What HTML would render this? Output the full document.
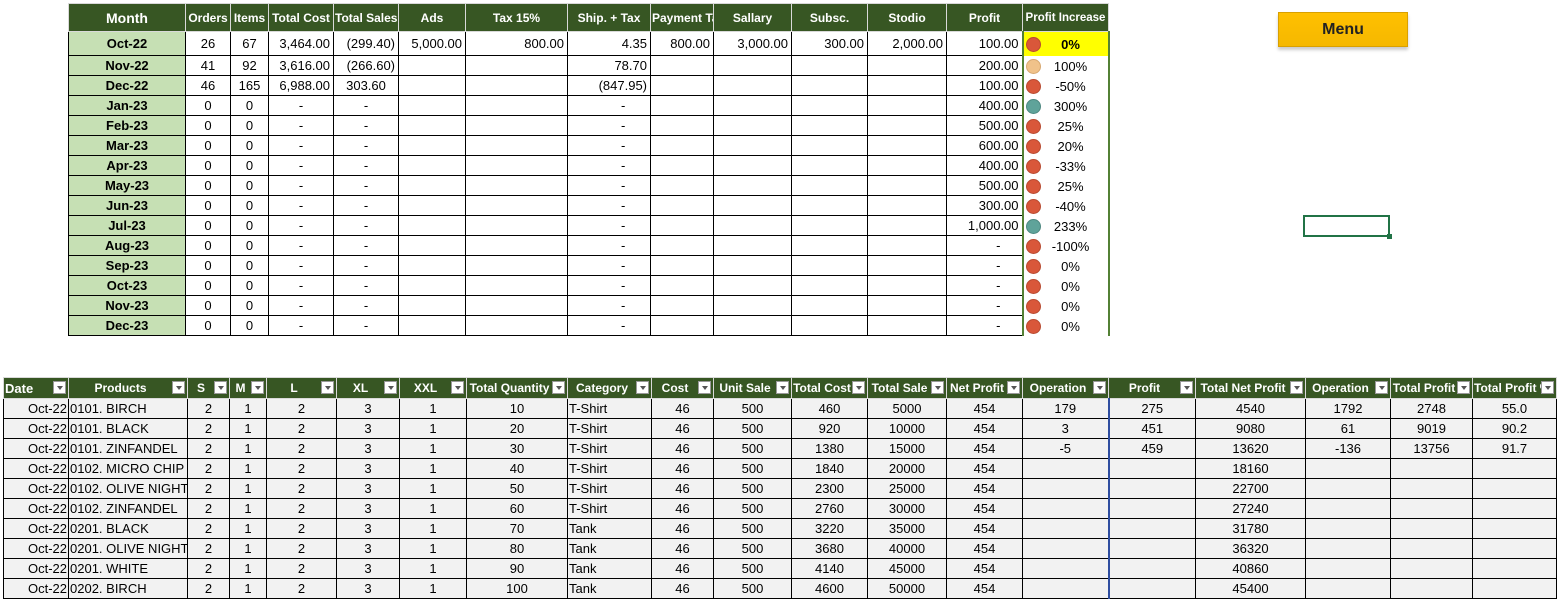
<!DOCTYPE html>
<html><head><meta charset="utf-8"><style>
body{margin:0;width:1559px;height:588px;background:#fff;overflow:hidden;position:relative;font-family:"Liberation Sans Narrow","Liberation Sans",sans-serif;font-size:13px;color:#000}
table{border-collapse:collapse;table-layout:fixed;position:absolute}
td,th{padding:0 3px;white-space:nowrap;overflow:hidden;box-sizing:border-box}
#t1{left:68px;top:3px;width:1040px}
#t1 th{background:#375623;color:#fff;height:28px;border:1px solid #d9d9d9;font-weight:bold;font-size:12px;padding:0 1px}
#t1 td{height:20px;border:1px solid #000;text-align:right}
#t1 td.m{background:#c6e0b4;font-weight:bold;text-align:center}
#t1 td.c{text-align:center}
#t1 tr.r1 td{height:24px}
#t1 td.pi{border:none;border-left:2px solid #538135;border-right:2px solid #538135;text-align:left;padding-left:2px}
.d{display:inline-block;width:15px;height:15px;border-radius:50%;background:#d9573a;vertical-align:middle;margin-right:10px;border:1px solid #b84a30;box-sizing:border-box}
.d.t{background:#f0c28a;border-color:#d7a870}.d.g{background:#5fa39a;border-color:#4d8880}
.pv{display:inline-block;width:40px;text-align:center;vertical-align:middle}
#t2{left:3px;top:377px;width:1553px}
#t2 th{background:#375623;color:#fff;height:21px;border:1px solid #d9d9d9;font-weight:bold;font-size:12px;position:relative;text-align:center;padding:0 16px 0 1px}
#t2 th i{position:absolute;right:2px;top:3px;width:13px;height:13px;background:#fff;border:1px solid #999;box-sizing:border-box}
#t2 th i:after{content:"";position:absolute;left:3px;top:4px;border:3px solid transparent;border-top:4px solid #555}
#t2 td{height:20px;border:1px solid #000;background:#f2f2f2;text-align:center;font-size:13px}
#t2 td:nth-child(1){text-align:right;padding-right:1px}
#t2 td:nth-child(2),#t2 td:nth-child(9){text-align:left;padding-left:1px}
#t2 td:nth-child(15){border-right:2px solid #2f4ea0}
.menu{position:absolute;left:1278px;top:12px;width:130px;height:35px;background:linear-gradient(#ffc000,#f5b800);box-sizing:border-box;border:1px solid #d9a000;box-shadow:0 3px 3px #ccc;font-family:"Liberation Sans",sans-serif;font-weight:bold;font-size:16px;text-align:center;line-height:34px;color:#222}
.sel{position:absolute;left:1303px;top:215px;width:87px;height:22px;border:2px solid #217346;box-sizing:border-box}
.sel:after{content:"";position:absolute;right:-4px;bottom:-4px;width:5px;height:5px;background:#217346}
</style></head><body>
<table id="t1">
<colgroup><col style="width:117px"><col style="width:45px"><col style="width:38px"><col style="width:65px"><col style="width:65px"><col style="width:67px"><col style="width:102px"><col style="width:83px"><col style="width:63px"><col style="width:78px"><col style="width:76px"><col style="width:79px"><col style="width:76px"><col style="width:86px"></colgroup>
<tr><th style="font-size:14px">Month</th><th>Orders</th><th>Items</th><th>Total Cost</th><th>Total Sales</th><th>Ads</th><th>Tax 15%</th><th>Ship. + Tax</th><th style="text-align:left">Payment Tax</th><th>Sallary</th><th>Subsc.</th><th>Stodio</th><th>Profit</th><th style="font-size:11.5px">Profit Increase</th></tr>
<tr class="r1"><td class="m">Oct-22</td><td class="c">26</td><td class="c">67</td><td>3,464.00</td><td>(299.40)</td><td>5,000.00</td><td>800.00</td><td>4.35</td><td>800.00</td><td>3,000.00</td><td>300.00</td><td>2,000.00</td><td>100.00</td><td class="pi" style="background:#ff0"><span class="d"></span><b class="pv">0%</b></td></tr>
<tr><td class="m">Nov-22</td><td class="c">41</td><td class="c">92</td><td>3,616.00</td><td>(266.60)</td><td></td><td></td><td>78.70</td><td></td><td></td><td></td><td></td><td>200.00</td><td class="pi"><span class="d t"></span><span class="pv">100%</span></td></tr>
<tr><td class="m">Dec-22</td><td class="c">46</td><td class="c">165</td><td>6,988.00</td><td class="c">303.60</td><td></td><td></td><td>(847.95)</td><td></td><td></td><td></td><td></td><td>100.00</td><td class="pi"><span class="d"></span><span class="pv">-50%</span></td></tr>
<tr><td class="m">Jan-23</td><td class="c">0</td><td class="c">0</td><td class="c">-</td><td class="c">-</td><td></td><td></td><td>- &nbsp;&nbsp;&nbsp;&nbsp;&nbsp;</td><td></td><td></td><td></td><td></td><td>400.00</td><td class="pi"><span class="d g"></span><span class="pv">300%</span></td></tr>
<tr><td class="m">Feb-23</td><td class="c">0</td><td class="c">0</td><td class="c">-</td><td class="c">-</td><td></td><td></td><td>- &nbsp;&nbsp;&nbsp;&nbsp;&nbsp;</td><td></td><td></td><td></td><td></td><td>500.00</td><td class="pi"><span class="d"></span><span class="pv">25%</span></td></tr>
<tr><td class="m">Mar-23</td><td class="c">0</td><td class="c">0</td><td class="c">-</td><td class="c">-</td><td></td><td></td><td>- &nbsp;&nbsp;&nbsp;&nbsp;&nbsp;</td><td></td><td></td><td></td><td></td><td>600.00</td><td class="pi"><span class="d"></span><span class="pv">20%</span></td></tr>
<tr><td class="m">Apr-23</td><td class="c">0</td><td class="c">0</td><td class="c">-</td><td class="c">-</td><td></td><td></td><td>- &nbsp;&nbsp;&nbsp;&nbsp;&nbsp;</td><td></td><td></td><td></td><td></td><td>400.00</td><td class="pi"><span class="d"></span><span class="pv">-33%</span></td></tr>
<tr><td class="m">May-23</td><td class="c">0</td><td class="c">0</td><td class="c">-</td><td class="c">-</td><td></td><td></td><td>- &nbsp;&nbsp;&nbsp;&nbsp;&nbsp;</td><td></td><td></td><td></td><td></td><td>500.00</td><td class="pi"><span class="d"></span><span class="pv">25%</span></td></tr>
<tr><td class="m">Jun-23</td><td class="c">0</td><td class="c">0</td><td class="c">-</td><td class="c">-</td><td></td><td></td><td>- &nbsp;&nbsp;&nbsp;&nbsp;&nbsp;</td><td></td><td></td><td></td><td></td><td>300.00</td><td class="pi"><span class="d"></span><span class="pv">-40%</span></td></tr>
<tr><td class="m">Jul-23</td><td class="c">0</td><td class="c">0</td><td class="c">-</td><td class="c">-</td><td></td><td></td><td>- &nbsp;&nbsp;&nbsp;&nbsp;&nbsp;</td><td></td><td></td><td></td><td></td><td>1,000.00</td><td class="pi"><span class="d g"></span><span class="pv">233%</span></td></tr>
<tr><td class="m">Aug-23</td><td class="c">0</td><td class="c">0</td><td class="c">-</td><td class="c">-</td><td></td><td></td><td>- &nbsp;&nbsp;&nbsp;&nbsp;&nbsp;</td><td></td><td></td><td></td><td></td><td>- &nbsp;&nbsp;&nbsp;&nbsp;</td><td class="pi"><span class="d"></span><span class="pv">-100%</span></td></tr>
<tr><td class="m">Sep-23</td><td class="c">0</td><td class="c">0</td><td class="c">-</td><td class="c">-</td><td></td><td></td><td>- &nbsp;&nbsp;&nbsp;&nbsp;&nbsp;</td><td></td><td></td><td></td><td></td><td>- &nbsp;&nbsp;&nbsp;&nbsp;</td><td class="pi"><span class="d"></span><span class="pv">0%</span></td></tr>
<tr><td class="m">Oct-23</td><td class="c">0</td><td class="c">0</td><td class="c">-</td><td class="c">-</td><td></td><td></td><td>- &nbsp;&nbsp;&nbsp;&nbsp;&nbsp;</td><td></td><td></td><td></td><td></td><td>- &nbsp;&nbsp;&nbsp;&nbsp;</td><td class="pi"><span class="d"></span><span class="pv">0%</span></td></tr>
<tr><td class="m">Nov-23</td><td class="c">0</td><td class="c">0</td><td class="c">-</td><td class="c">-</td><td></td><td></td><td>- &nbsp;&nbsp;&nbsp;&nbsp;&nbsp;</td><td></td><td></td><td></td><td></td><td>- &nbsp;&nbsp;&nbsp;&nbsp;</td><td class="pi"><span class="d"></span><span class="pv">0%</span></td></tr>
<tr><td class="m">Dec-23</td><td class="c">0</td><td class="c">0</td><td class="c">-</td><td class="c">-</td><td></td><td></td><td>- &nbsp;&nbsp;&nbsp;&nbsp;&nbsp;</td><td></td><td></td><td></td><td></td><td>- &nbsp;&nbsp;&nbsp;&nbsp;</td><td class="pi"><span class="d"></span><span class="pv">0%</span></td></tr>
</table>
<div class="menu">Menu</div>
<div class="sel"></div>
<table id="t2">
<colgroup><col style="width:65px"><col style="width:119px"><col style="width:42px"><col style="width:37px"><col style="width:70px"><col style="width:63px"><col style="width:67px"><col style="width:101px"><col style="width:84px"><col style="width:62px"><col style="width:78px"><col style="width:76px"><col style="width:79px"><col style="width:76px"><col style="width:86px"><col style="width:87px"><col style="width:110px"><col style="width:85px"><col style="width:82px"><col style="width:84px"></colgroup>
<tr><th style="text-align:left;font-size:13px">Date<i></i></th><th>Products<i></i></th><th>S<i></i></th><th>M<i></i></th><th>L<i></i></th><th>XL<i></i></th><th>XXL<i></i></th><th>Total Quantity<i></i></th><th>Category<i></i></th><th>Cost<i></i></th><th>Unit Sale<i></i></th><th>Total Cost<i></i></th><th>Total Sale<i></i></th><th>Net Profit<i></i></th><th>Operation<i></i></th><th>Profit<i></i></th><th>Total Net Profit<i></i></th><th>Operation<i></i></th><th>Total Profit<i></i></th><th>Total Profit %<i></i></th></tr>
<tr><td>Oct-22</td><td>0101. BIRCH</td><td>2</td><td>1</td><td>2</td><td>3</td><td>1</td><td>10</td><td>T-Shirt</td><td>46</td><td>500</td><td>460</td><td>5000</td><td>454</td><td>179</td><td>275</td><td>4540</td><td>1792</td><td>2748</td><td>55.0</td></tr>
<tr><td>Oct-22</td><td>0101. BLACK</td><td>2</td><td>1</td><td>2</td><td>3</td><td>1</td><td>20</td><td>T-Shirt</td><td>46</td><td>500</td><td>920</td><td>10000</td><td>454</td><td>3</td><td>451</td><td>9080</td><td>61</td><td>9019</td><td>90.2</td></tr>
<tr><td>Oct-22</td><td>0101. ZINFANDEL</td><td>2</td><td>1</td><td>2</td><td>3</td><td>1</td><td>30</td><td>T-Shirt</td><td>46</td><td>500</td><td>1380</td><td>15000</td><td>454</td><td>-5</td><td>459</td><td>13620</td><td>-136</td><td>13756</td><td>91.7</td></tr>
<tr><td>Oct-22</td><td>0102. MICRO CHIP</td><td>2</td><td>1</td><td>2</td><td>3</td><td>1</td><td>40</td><td>T-Shirt</td><td>46</td><td>500</td><td>1840</td><td>20000</td><td>454</td><td></td><td></td><td>18160</td><td></td><td></td><td></td></tr>
<tr><td>Oct-22</td><td>0102. OLIVE NIGHT</td><td>2</td><td>1</td><td>2</td><td>3</td><td>1</td><td>50</td><td>T-Shirt</td><td>46</td><td>500</td><td>2300</td><td>25000</td><td>454</td><td></td><td></td><td>22700</td><td></td><td></td><td></td></tr>
<tr><td>Oct-22</td><td>0102. ZINFANDEL</td><td>2</td><td>1</td><td>2</td><td>3</td><td>1</td><td>60</td><td>T-Shirt</td><td>46</td><td>500</td><td>2760</td><td>30000</td><td>454</td><td></td><td></td><td>27240</td><td></td><td></td><td></td></tr>
<tr><td>Oct-22</td><td>0201. BLACK</td><td>2</td><td>1</td><td>2</td><td>3</td><td>1</td><td>70</td><td>Tank</td><td>46</td><td>500</td><td>3220</td><td>35000</td><td>454</td><td></td><td></td><td>31780</td><td></td><td></td><td></td></tr>
<tr><td>Oct-22</td><td>0201. OLIVE NIGHT</td><td>2</td><td>1</td><td>2</td><td>3</td><td>1</td><td>80</td><td>Tank</td><td>46</td><td>500</td><td>3680</td><td>40000</td><td>454</td><td></td><td></td><td>36320</td><td></td><td></td><td></td></tr>
<tr><td>Oct-22</td><td>0201. WHITE</td><td>2</td><td>1</td><td>2</td><td>3</td><td>1</td><td>90</td><td>Tank</td><td>46</td><td>500</td><td>4140</td><td>45000</td><td>454</td><td></td><td></td><td>40860</td><td></td><td></td><td></td></tr>
<tr><td>Oct-22</td><td>0202. BIRCH</td><td>2</td><td>1</td><td>2</td><td>3</td><td>1</td><td>100</td><td>Tank</td><td>46</td><td>500</td><td>4600</td><td>50000</td><td>454</td><td></td><td></td><td>45400</td><td></td><td></td><td></td></tr>
</table>
</body></html>
